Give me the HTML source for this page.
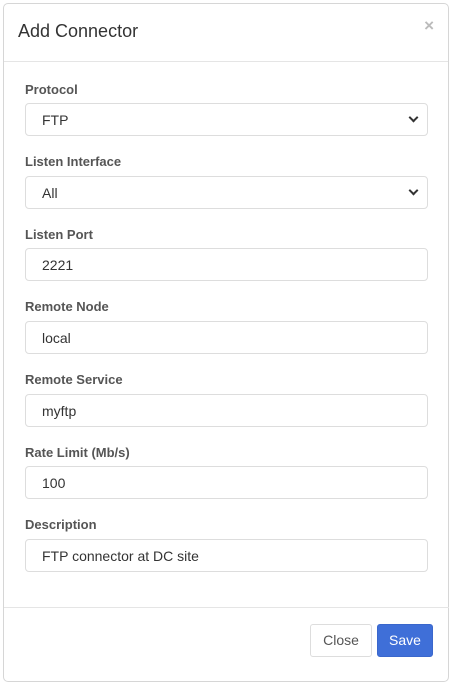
<!DOCTYPE html>
<html><head><style>
body{margin:0;width:453px;height:684px;background:#fff;font-family:"Liberation Sans",sans-serif;position:relative;overflow:hidden}
.m{position:absolute;left:3px;top:3px;width:446px;height:679px;border:1px solid #d6d6d6;border-radius:5px;box-sizing:border-box}
.h{position:absolute;left:0;top:0;right:0;height:57px;border-bottom:1px solid #e5e5e5}
.t{position:absolute;left:14px;top:17px;font-size:18px;color:#333}
.x{position:absolute;right:14px;top:12px;font-size:17px;color:#bbb;font-weight:bold}
.l{position:absolute;left:25px;font-size:13px;color:#555;font-weight:bold}
.i{position:absolute;left:25px;width:403px;height:33px;border:1px solid #ddd;border-radius:4px;box-sizing:border-box;font-size:14px;color:#333;padding:8px 0 0 16px}
.s:after{content:"";position:absolute;right:10px;top:10px;width:5px;height:5px;border-right:2px solid #333;border-bottom:2px solid #333;transform:rotate(45deg)}
.f{position:absolute;left:4px;right:4px;top:607px;border-top:1px solid #e5e5e5}
.b{position:absolute;top:624px;height:33px;border-radius:3px;box-sizing:border-box;font-size:14px;text-align:center;line-height:31px}
</style></head><body>
<div class="m"><div class="h"><div class="t">Add Connector</div><div class="x">×</div></div></div>
<div class="l" style="top:82px">Protocol</div><div class="i s" style="top:103px">FTP</div>
<div class="l" style="top:154px">Listen Interface</div><div class="i s" style="top:176px">All</div>
<div class="l" style="top:227px">Listen Port</div><div class="i" style="top:248px">2221</div>
<div class="l" style="top:299px">Remote Node</div><div class="i" style="top:321px">local</div>
<div class="l" style="top:372px">Remote Service</div><div class="i" style="top:394px">myftp</div>
<div class="l" style="top:445px">Rate Limit (Mb/s)</div><div class="i" style="top:466px">100</div>
<div class="l" style="top:517px">Description</div><div class="i" style="top:539px">FTP connector at DC site</div>
<div class="f"></div>
<div class="b" style="left:310px;width:62px;border:1px solid #ddd;color:#555">Close</div>
<div class="b" style="left:377px;width:56px;background:#3f6fd8;color:#fff;border:1px solid #3a67cc">Save</div>
</body></html>
